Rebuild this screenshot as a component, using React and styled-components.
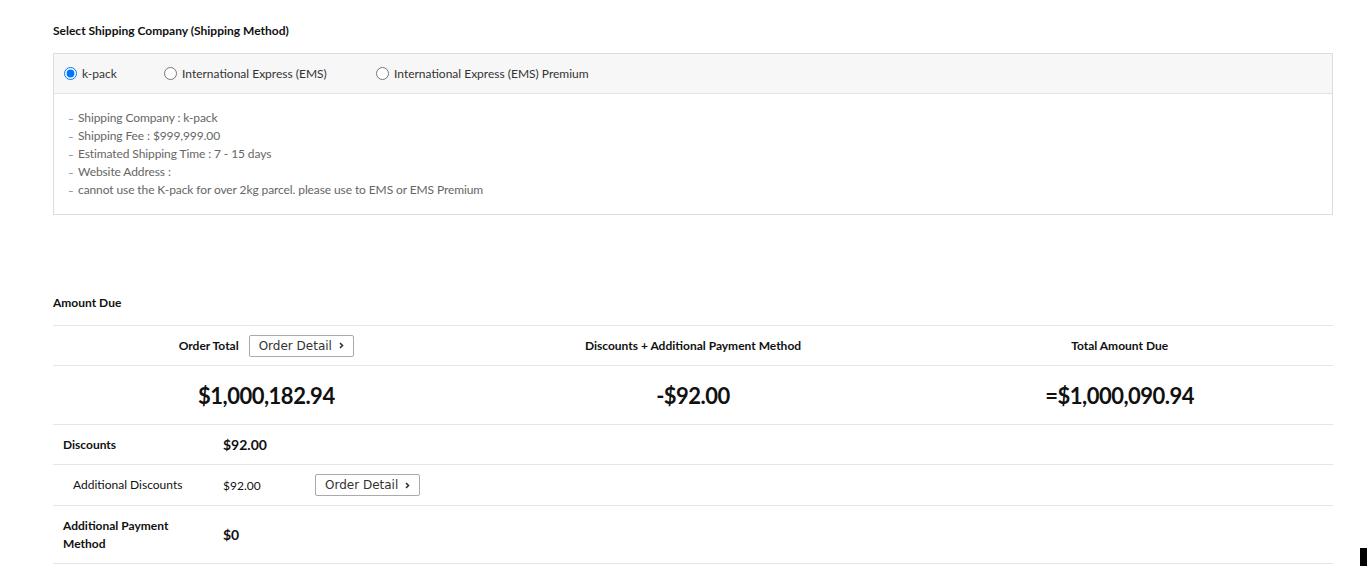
import React, { useState } from "react";
import styled, { createGlobalStyle } from "styled-components";

const GlobalStyle = createGlobalStyle`
  html, body {
    margin: 0;
    padding: 0;
    background: #fff;
  }
  body {
    font-family: Lato, "Open Sans", sans-serif;
    color: #222;
  }
`;

const Page = styled.div`
  position: relative;
  height: 566px;
  padding: 22px 36px 0 53px;
  box-sizing: border-box;
  overflow: hidden;
`;

const SectionTitle = styled.h3`
  margin: 0;
  font-size: 12px;
  line-height: 18px;
  font-weight: 700;
  color: #111;
`;

const ShippingBox = styled.div`
  margin-top: 13px;
  border: 1px solid #dcdcdc;
`;

const RadioBar = styled.div`
  display: flex;
  align-items: center;
  height: 39px;
  padding-left: 10px;
  background: #f7f7f7;
  border-bottom: 1px solid #e3e3e3;
`;

const RadioLabel = styled.label`
  display: flex;
  align-items: center;
  width: ${(p) => p.$width}px;
  font-size: 12px;
  color: #333;
  cursor: pointer;

  input {
    margin: 0 5px 0 0;
    width: 13px;
    height: 13px;
  }
`;

const InfoList = styled.ul`
  list-style: none;
  margin: 0;
  padding: 15px 14px 15px;
`;

const InfoItem = styled.li`
  height: 18px;
  font-size: 12px;
  line-height: 18px;
  letter-spacing: -0.1px;
  color: #666;

  &::before {
    content: "–";
    display: inline-block;
    width: 10px;
    font-size: 10px;
    line-height: 10px;
    color: #777;
  }
`;

const AmountTitle = styled(SectionTitle)`
  margin-top: 79px;
`;

const Table = styled.div`
  margin-top: 13px;
  border-top: 1px solid #e6e6e6;
`;

const SummaryRow = styled.div`
  display: grid;
  grid-template-columns: repeat(3, 1fr);
  height: ${(p) => p.$height}px;
  border-bottom: 1px solid #e6e6e6;
  box-sizing: border-box;
`;

const HeadCell = styled.div`
  display: flex;
  align-items: center;
  justify-content: center;
  gap: 10px;
  font-size: 12px;
  font-weight: 700;
  color: #111;
`;

const BigValue = styled.div`
  display: flex;
  align-items: center;
  justify-content: center;
  font-size: 22px;
  font-weight: 700;
  color: #111;
  letter-spacing: -0.5px;
`;

const DetailButton = styled.button`
  display: inline-flex;
  align-items: center;
  gap: 7px;
  height: 22px;
  padding: 0 9px;
  border: 1px solid #aaa;
  border-radius: 2px;
  background: #fff;
  font-family: "DejaVu Sans", sans-serif;
  font-size: 12px;
  font-weight: 400;
  color: #333;
  cursor: pointer;
`;

const Row = styled.div`
  display: flex;
  align-items: center;
  min-height: ${(p) => p.$height}px;
  border-bottom: 1px solid #e6e6e6;
  box-sizing: border-box;
`;

const RowLabel = styled.div`
  width: 170px;
  box-sizing: border-box;
  padding: 0 40px 0 ${(p) => (p.$indent ? 20 : 10)}px;
  font-size: 12px;
  line-height: 18px;
  font-weight: ${(p) => (p.$bold ? 700 : 400)};
  color: #111;
`;

const RowValue = styled.div`
  width: 92px;
  font-size: ${(p) => (p.$bold ? 14 : 12)}px;
  font-weight: ${(p) => (p.$bold ? 700 : 400)};
  color: #111;
`;

const Marker = styled.div`
  position: absolute;
  right: 2px;
  bottom: 0;
  width: 7px;
  height: 18px;
  background: #000;
`;

const Chevron = () => (
  <svg width="5" height="7" viewBox="0 0 5 7">
    <path d="M1 1l2.5 2.5L1 6" fill="none" stroke="#333" strokeWidth="1.6" />
  </svg>
);

const OrderDetail = () => (
  <DetailButton type="button">
    Order Detail <Chevron />
  </DetailButton>
);

const methods = [
  { id: "kpack", label: "k-pack", width: 100 },
  { id: "ems", label: "International Express (EMS)", width: 212 },
  { id: "emsp", label: "International Express (EMS) Premium", width: 260 },
];

const info = [
  "Shipping Company : k-pack",
  "Shipping Fee : $999,999.00",
  "Estimated Shipping Time : 7 - 15 days",
  "Website Address :",
  "cannot use the K-pack for over 2kg parcel. please use to EMS or EMS Premium",
];

export default function App() {
  const [method, setMethod] = useState("kpack");

  return (
    <Page>
      <GlobalStyle />
      <SectionTitle>Select Shipping Company (Shipping Method)</SectionTitle>
      <ShippingBox>
        <RadioBar>
          {methods.map((m) => (
            <RadioLabel key={m.id} $width={m.width}>
              <input
                type="radio"
                name="shipping"
                checked={method === m.id}
                onChange={() => setMethod(m.id)}
              />
              {m.label}
            </RadioLabel>
          ))}
        </RadioBar>
        <InfoList>
          {info.map((t) => (
            <InfoItem key={t}>{t}</InfoItem>
          ))}
        </InfoList>
      </ShippingBox>

      <AmountTitle>Amount Due</AmountTitle>
      <Table>
        <SummaryRow $height={40}>
          <HeadCell>
            Order Total <OrderDetail />
          </HeadCell>
          <HeadCell>Discounts + Additional Payment Method</HeadCell>
          <HeadCell>Total Amount Due</HeadCell>
        </SummaryRow>
        <SummaryRow $height={59}>
          <BigValue>$1,000,182.94</BigValue>
          <BigValue>-$92.00</BigValue>
          <BigValue>=$1,000,090.94</BigValue>
        </SummaryRow>
        <Row $height={40}>
          <RowLabel $bold>Discounts</RowLabel>
          <RowValue $bold>$92.00</RowValue>
        </Row>
        <Row $height={41}>
          <RowLabel $indent>Additional Discounts</RowLabel>
          <RowValue>$92.00</RowValue>
          <OrderDetail />
        </Row>
        <Row $height={58}>
          <RowLabel $bold>Additional Payment Method</RowLabel>
          <RowValue $bold>$0</RowValue>
        </Row>
      </Table>
      <Marker />
    </Page>
  );
}
